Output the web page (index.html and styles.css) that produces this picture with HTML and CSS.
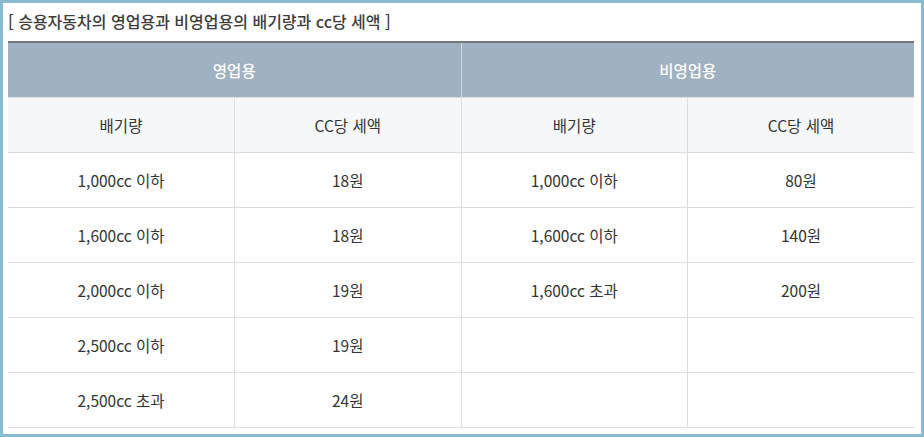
FILE: index.html
```html
<!DOCTYPE html>
<html lang="ko">
<head>
<meta charset="utf-8">
<link rel="stylesheet" href="styles.css">
</head>
<body>
<div class="frame">
  <p class="caption">[ 승용자동차의 영업용과 비영업용의 배기량과 cc당 세액 ]</p>
  <table class="tax">
    <thead>
      <tr class="group">
        <th colspan="2">영업용</th>
        <th colspan="2">비영업용</th>
      </tr>
      <tr class="sub">
        <th>배기량</th>
        <th>CC당 세액</th>
        <th>배기량</th>
        <th>CC당 세액</th>
      </tr>
    </thead>
    <tbody>
      <tr><td>1,000cc 이하</td><td>18원</td><td>1,000cc 이하</td><td>80원</td></tr>
      <tr><td>1,600cc 이하</td><td>18원</td><td>1,600cc 이하</td><td>140원</td></tr>
      <tr><td>2,000cc 이하</td><td>19원</td><td>1,600cc 초과</td><td>200원</td></tr>
      <tr><td>2,500cc 이하</td><td>19원</td><td></td><td></td></tr>
      <tr><td>2,500cc 초과</td><td>24원</td><td></td><td></td></tr>
    </tbody>
  </table>
</div>
</body>
</html>
```

FILE: styles.css
```css
html, body {
  margin: 0;
  padding: 0;
  background: #ffffff;
}
body {
  font-family: "Noto Sans CJK KR", "Noto Sans", sans-serif;
  color: #333333;
}
.frame {
  box-sizing: border-box;
  width: 924px;
  height: 437px;
  border: 3px solid #88bbd0;
  padding: 0 7px 0 5px;
  background: #fff;
}
.caption {
  margin: 0;
  height: 38px;
  line-height: 36px;
  font-size: 16px;
  font-weight: 500;
  color: #3c3c3c;
}
.tax {
  width: 906px;
  border-collapse: collapse;
  table-layout: fixed;
  border-top: 2px solid #777777;
  font-size: 15.5px;
}
.tax th, .tax td {
  text-align: center;
  font-weight: normal;
  padding: 0;
  border: 1px solid #dddddd;
}
.tax tr > :first-child { border-left: none; }
.tax tr > :last-child { border-right: none; }
.group th {
  height: 54px;
  background: #a0b2c1;
  color: #ffffff;
  font-weight: 500;
  border-top: none;
  border-color: #d3dbe2;
  border-bottom-color: #dddddd;
}
.sub th {
  height: 54px;
  background: #f6f7f9;
  color: #333;
}
.tax td {
  height: 54px;
  color: #333;
}
```
